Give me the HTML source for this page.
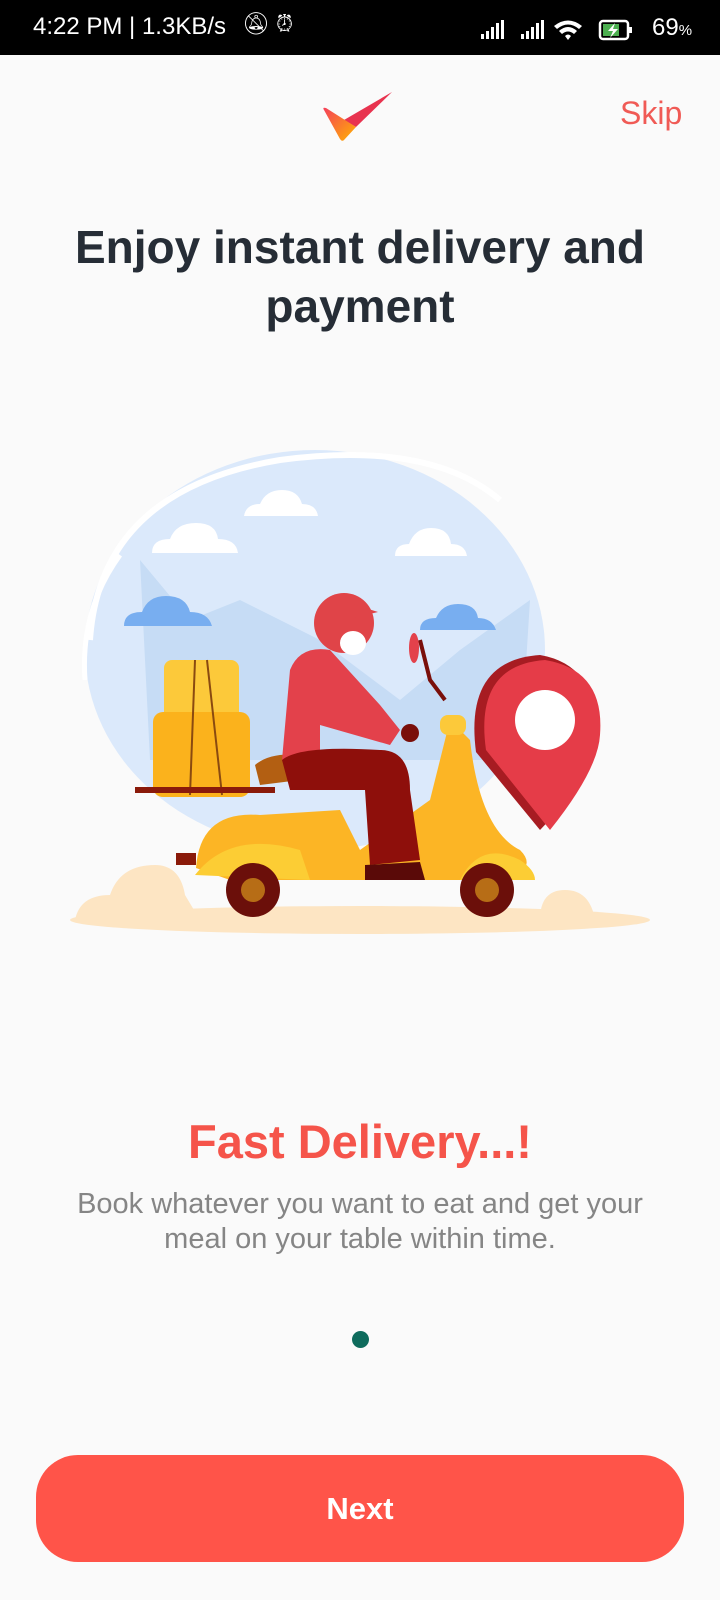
<!DOCTYPE html>
<html><head><meta charset="utf-8"><style>
*{margin:0;padding:0;box-sizing:border-box}
body{width:720px;height:1600px;background:#fafafa;font-family:"Liberation Sans",Roboto,sans-serif;position:relative;overflow:hidden}
.sb{position:absolute;left:0;top:0;width:720px;height:55px;background:#000;color:#fff;font-size:24px}
.abs{position:absolute}
.title{position:absolute;left:0;width:720px;top:218px;text-align:center;font-weight:bold;font-size:46px;line-height:59px;color:#262d36}
.h2{position:absolute;left:0;width:720px;top:1114px;text-align:center;font-weight:bold;font-size:47px;color:#f5544a}
.desc{position:absolute;left:0;width:720px;top:1187px;text-align:center;font-size:29px;line-height:35px;color:#858585}
.btn{position:absolute;left:36px;top:1455px;width:648px;height:107px;border-radius:42px;background:#ff5449;color:#fff;font-weight:bold;font-size:31px;text-align:center;line-height:107px}
</style></head><body>
<div class="sb">
<span class="abs" style="left:33px;top:13px">4:22 PM | 1.3KB/s</span>
<span class="abs" style="left:242px;top:11px;font-size:22px">🔕︎ ⏰︎</span>
<svg class="abs" style="left:478px;top:18px" width="210" height="26" viewBox="0 0 210 26" fill="#fff">
<rect x="3" y="16" width="3" height="5"/><rect x="8" y="13" width="3" height="8"/><rect x="13" y="9" width="3" height="12"/><rect x="18" y="5" width="3" height="16"/><rect x="23" y="2" width="3" height="19"/>
<rect x="43" y="16" width="3" height="5"/><rect x="48" y="13" width="3" height="8"/><rect x="53" y="9" width="3" height="12"/><rect x="58" y="5" width="3" height="16"/><rect x="63" y="2" width="3" height="19"/>
<path d="M76 8 Q90 -3 104 8 L101 11 Q90 2 79 11Z M81 13 Q90 5 99 13 L96 16 Q90 11 84 16Z M87 18 Q90 15 93 18 L90 22Z"/>
<rect x="122" y="3" width="28" height="18" rx="3" fill="none" stroke="#fff" stroke-width="2.5"/><rect x="125" y="6" width="16" height="12" fill="#4caf50"/><path d="M137 5 L130 13 L135 13 L132 20 L140 11 L135 11Z" fill="#fff"/><rect x="151" y="9" width="3" height="6"/>
</svg>
<span class="abs" style="left:652px;top:14px">69<span style="font-size:15px">%</span></span>
</div>
<svg class="abs" style="left:322px;top:90px" width="72" height="52" viewBox="0 0 72 52">
<defs><linearGradient id="g" x1="0" y1="0" x2="1" y2="1"><stop offset="0" stop-color="#f5405a"/><stop offset="1" stop-color="#ffb300"/></linearGradient></defs>
<path d="M70 2 L22 30 L34 37Z" fill="#e8334f"/><path d="M2 20 Q0 17 4 18 L34 37 L22 50 Q20 52 18 49Z" fill="url(#g)"/>
</svg>
<div class="abs" style="left:620px;top:95px;font-size:32px;color:#f05a55">Skip</div>
<div class="title">Enjoy instant delivery and<br>payment</div>
<svg class="abs" style="left:60px;top:440px" width="600" height="500" viewBox="60 440 600 500">
<ellipse cx="315" cy="650" rx="230" ry="200" fill="#dbe9fb"/>
<path d="M90 640 Q100 490 280 460 Q430 440 500 500" fill="none" stroke="#fff" stroke-width="6"/>
<path d="M85 680 Q80 610 120 555" fill="none" stroke="#fff" stroke-width="5"/>
<path d="M140 560 L190 620 L240 600 L320 640 L400 700 L460 650 L530 600 L520 760 L150 760 Z" fill="#c6dcf5"/>
<g fill="#fff"><path d="M152 553 q0-14 18-14 q6-16 26-16 q20 0 22 16 q18 0 20 14Z"/><path d="M244 516 q2-12 16-12 q6-14 22-14 q16 0 20 14 q14 0 16 12Z"/><path d="M395 556 q0-12 14-12 q6-16 22-16 q18 0 20 16 q14 0 16 12Z"/></g>
<g fill="#78aef0"><path d="M124 626 q0-14 18-14 q6-16 24-16 q20 0 24 16 q18 0 22 14Z"/><path d="M420 630 q0-12 16-12 q6-14 22-14 q18 0 20 14 q14 0 18 12Z"/></g>
<ellipse cx="360" cy="920" rx="290" ry="14" fill="#fde5c3"/>
<path d="M75 920 q5-25 35-25 q10-30 45-30 q25 0 30 30 L200 920Z M540 920 q0-30 25-30 q25 0 30 30Z" fill="#fde5c3"/>
<rect x="164" y="660" width="75" height="62" rx="8" fill="#fcc93a"/>
<rect x="153" y="712" width="97" height="85" rx="10" fill="#fbb21c"/>
<path d="M195 660 L190 795 M207 660 L222 795" stroke="#8a4a10" stroke-width="2"/>
<rect x="135" y="787" width="140" height="6" fill="#8a1a0a"/>
<path d="M196 868 Q200 810 260 815 L340 810 L360 850 L430 800 L450 720 L470 740 Q480 830 520 850 Q540 870 500 880 L230 880 Z" fill="#fcb525"/>
<path d="M195 875 Q230 830 300 850 L310 880Z" fill="#fccd34"/>
<path d="M460 880 Q480 840 520 860 Q535 870 535 880Z" fill="#fccd34"/>
<circle cx="253" cy="890" r="27" fill="#6b0f0a"/><circle cx="253" cy="890" r="12" fill="#b76d16"/>
<circle cx="487" cy="890" r="27" fill="#6b0f0a"/><circle cx="487" cy="890" r="12" fill="#b76d16"/>
<rect x="176" y="853" width="20" height="12" fill="#8a1a0a"/>
<path d="M255 765 Q270 752 300 755 L300 780 L260 785Z" fill="#b35f12"/>
<path d="M282 760 L290 670 Q300 645 330 650 L380 705 L400 730 L390 745 L320 725 L320 760Z" fill="#e3414b"/>
<path d="M282 760 Q300 745 380 750 Q410 750 410 790 L420 860 L370 865 L365 790 L290 790Z" fill="#8e0f0b"/>
<path d="M365 865 L420 862 L425 880 L365 880Z" fill="#5a0a08"/>
<circle cx="410" cy="733" r="9" fill="#7a0f0a"/>
<rect x="440" y="715" width="26" height="20" rx="8" fill="#fcc93a"/>
<path d="M420 640 L430 680 L445 700" stroke="#7a0f0a" stroke-width="4" fill="none"/>
<ellipse cx="414" cy="648" rx="5" ry="15" fill="#e3414b"/>
<circle cx="344" cy="623" r="30" fill="#e04448"/><path d="M340 600 L378 612 L345 620Z" fill="#e04448"/>
<ellipse cx="353" cy="643" rx="13" ry="12" fill="#fff"/>
<path d="M476 752 Q464 660 540 655 Q598 665 596 735 Q594 775 540 830 Z" fill="#a71c22"/>
<path d="M486 750 Q474 665 545 660 Q605 670 600 735 Q598 770 550 830 Z" fill="#e53c48"/>
<circle cx="545" cy="720" r="30" fill="#fff"/>
</svg>
<div class="h2">Fast Delivery...!</div>
<div class="desc">Book whatever you want to eat and get your<br>meal on your table within time.</div>
<div class="abs" style="left:352px;top:1331px;width:17px;height:17px;border-radius:50%;background:#0e6b5c"></div>
<div class="btn">Next</div>
</body></html>
